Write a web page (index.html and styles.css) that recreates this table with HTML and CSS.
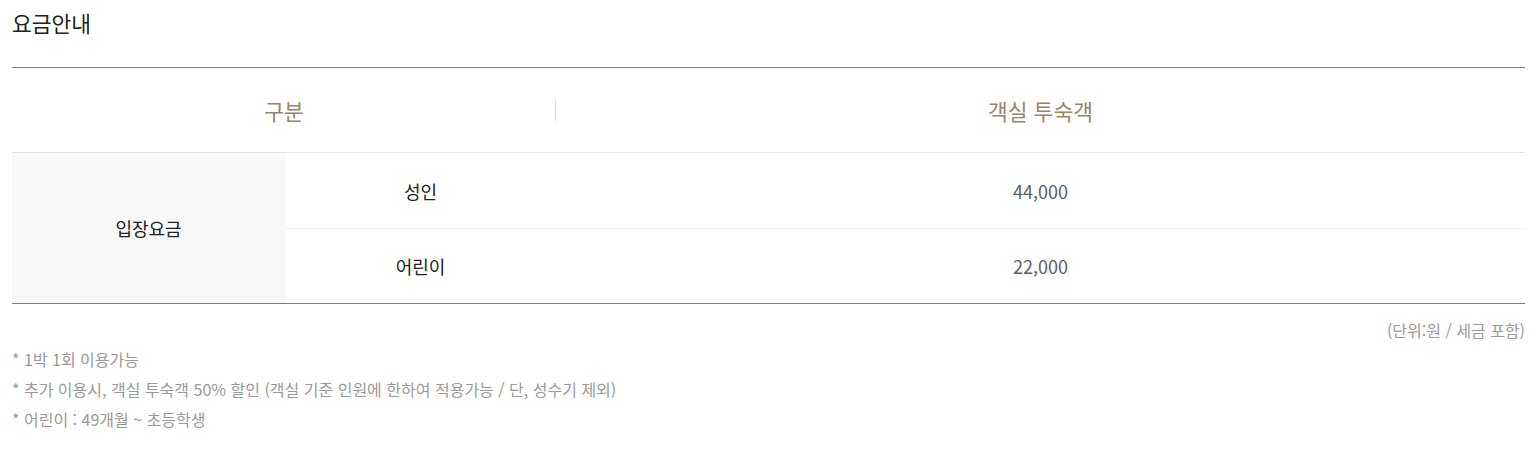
FILE: index.html
```html
<!DOCTYPE html>
<html lang="ko">
<head>
<meta charset="utf-8">
<link rel="stylesheet" href="styles.css">
</head>
<body>
<div class="wrap">
  <h2 class="title">요금안내</h2>
  <div class="table-box">
    <table class="price">
      <colgroup>
        <col class="c1"><col class="c2"><col class="c3">
      </colgroup>
      <thead>
        <tr>
          <th colspan="2" class="th-first"><span>구분</span></th>
          <th>객실 투숙객</th>
        </tr>
      </thead>
      <tbody>
        <tr>
          <td rowspan="2" class="cat">입장요금</td>
          <td class="label">성인</td>
          <td class="num">44,000</td>
        </tr>
        <tr class="second">
          <td class="label">어린이</td>
          <td class="num">22,000</td>
        </tr>
      </tbody>
    </table>
  </div>
  <p class="unit">(단위:원 / 세금 포함)</p>
  <ul class="notes">
    <li>* 1박 1회 이용가능</li>
    <li>* 추가 이용시, 객실 투숙객 50% 할인 (객실 기준 인원에 한하여 적용가능 / 단, 성수기 제외)</li>
    <li>* 어린이 : 49개월 ~ 초등학생</li>
  </ul>
</div>
</body>
</html>
```
FILE: styles.css
```css
* { box-sizing: border-box; }
body {
  margin: 0;
  background: #fff;
  font-family: "Noto Sans CJK KR", "Noto Sans", sans-serif;
  color: #222;
}
.wrap {
  padding: 0 15px 0 12px;
}
.title {
  margin: 0;
  padding-top: 8px;
  height: 67px;
  font-size: 21.5px;
  font-weight: 400;
  line-height: 30px;
  color: #222;
}
.table-box {
  border-top: 1px solid #8c7a64;
  border-bottom: 1px solid #9a7848;
}
.price {
  width: 100%;
  border-collapse: separate;
  border-spacing: 0;
  table-layout: fixed;
}
.c1 { width: 273px; }
.c2 { width: 271px; }
.price th,
.price td {
  box-sizing: content-box;
  padding: 0;
  text-align: center;
}
.price th {
  height: 84px;
  font-size: 21.5px;
  font-weight: 400;
  color: #9a8266;
  border-bottom: 1px solid #e4e4e4;
}
.th-first {
  position: relative;
}
.th-first::after {
  content: "";
  position: absolute;
  right: 0;
  top: 31px;
  width: 1px;
  height: 22px;
  background: #dcdcdc;
}
.price td {
  height: 75px;
  font-size: 18px;
}
.price .second td { height: 74px; border-top: 1px solid #f0f0f0; }
.cat {
  background: #f8f8f8;
  color: #222;
}
.label { color: #222; }
.num { color: #5a5f6a; font-size: 17.5px; }
.unit {
  margin: 14px 0 0;
  text-align: right;
  font-size: 16px;
  color: #999;
  line-height: 24px;
}
.notes {
  list-style: none;
  margin: 2px 0 0;
  padding: 0;
  font-size: 16px;
  color: #999;
}
.notes li {
  line-height: 30px;
}
```
